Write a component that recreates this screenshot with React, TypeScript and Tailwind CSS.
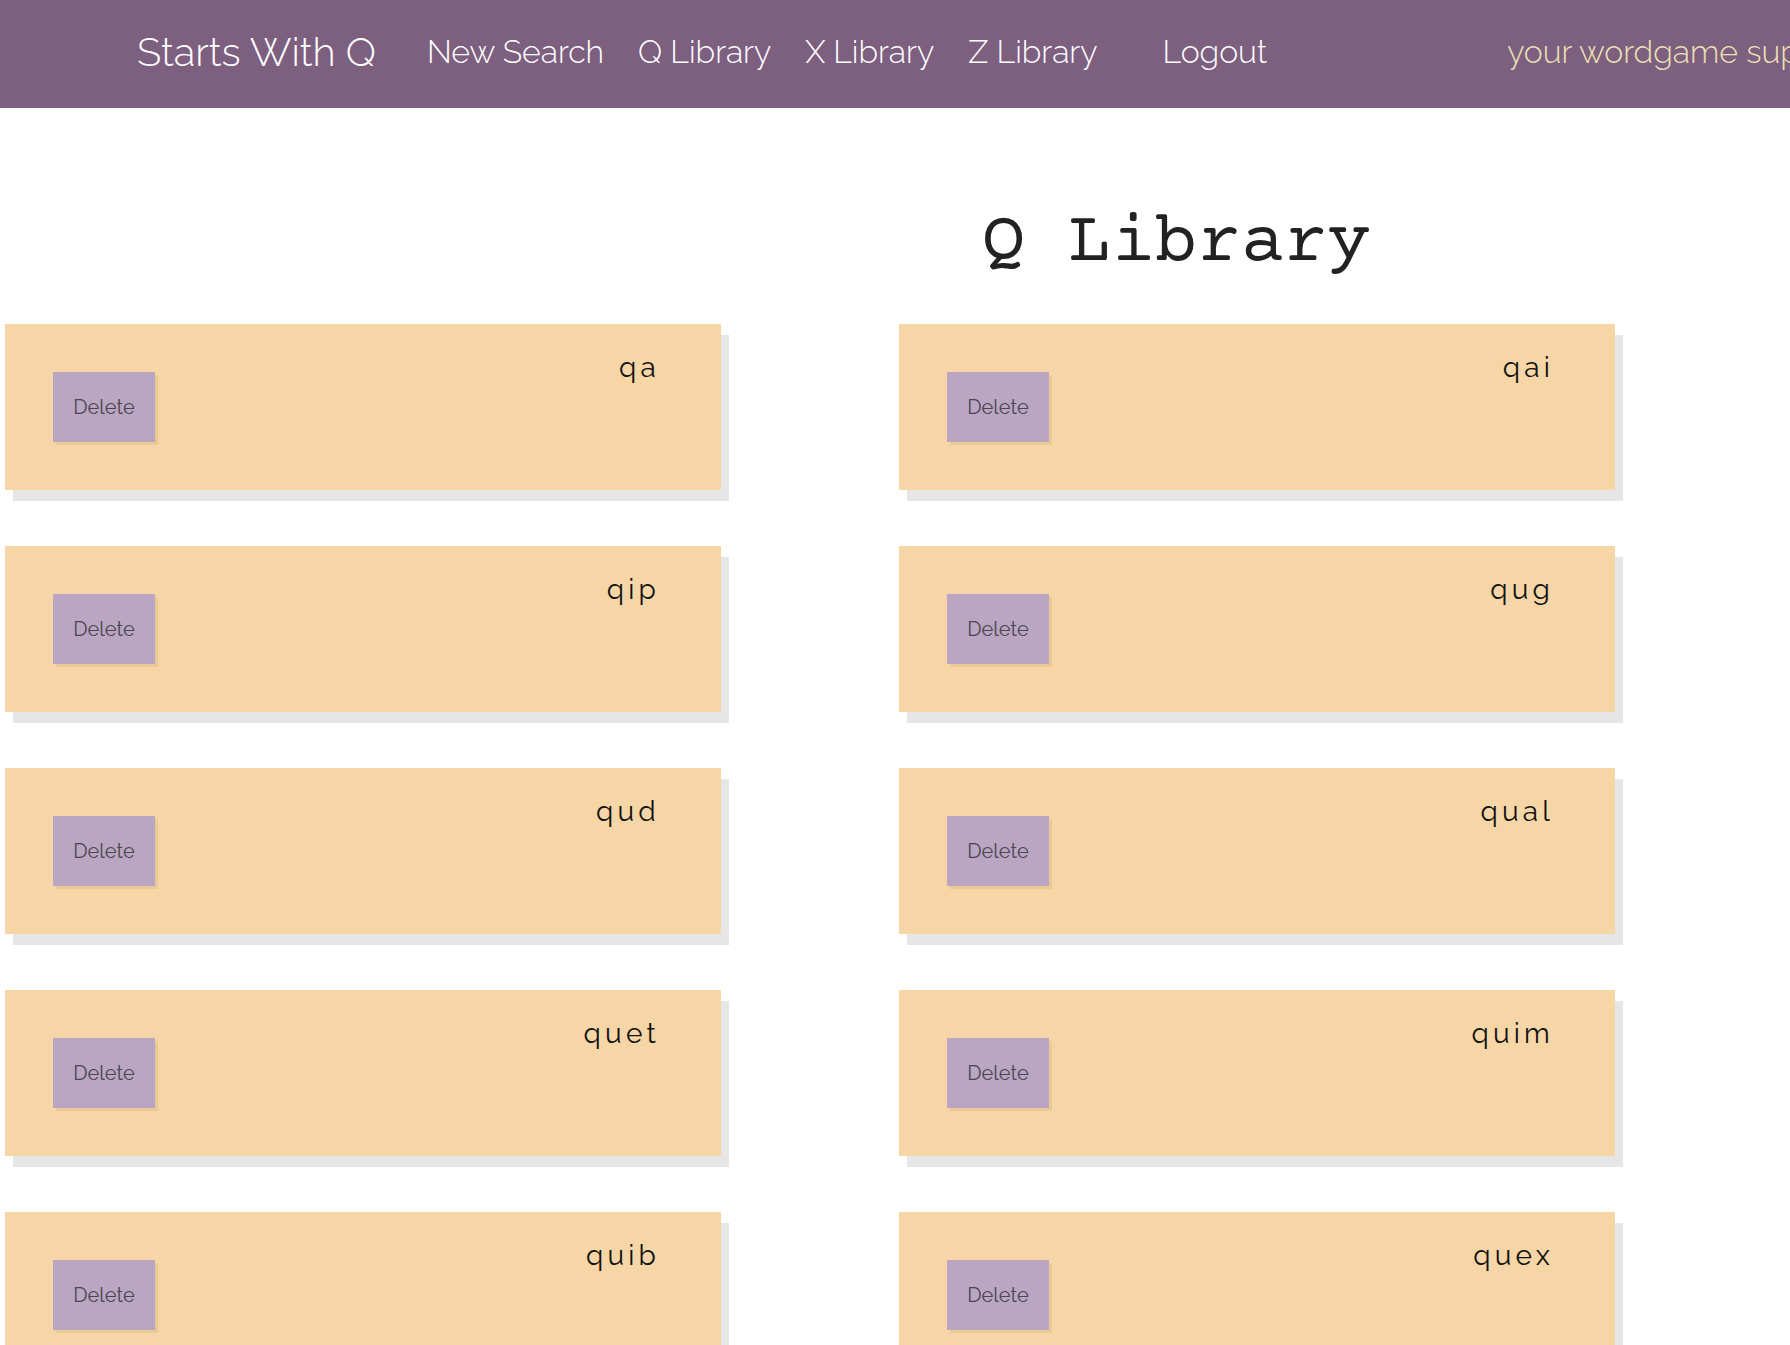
import React from "react";

const pairs: [string, string][] = [
  ["qa", "qai"],
  ["qip", "qug"],
  ["qud", "qual"],
  ["quet", "quim"],
  ["quib", "quex"],
];

const sans = "font-['Raleway','Lato','Open_Sans',sans-serif]";

const WordCard = ({ word }: { word: string }) => (
  <div className="flex h-[166px] w-[716px] shrink-0 items-start justify-between bg-[#f6d6a6] shadow-[8px_11px_0_#e6e6e6]">
    <button
      className={`${sans} ml-[48px] mt-[48px] h-[70px] w-[102px] bg-[#baa6c3] text-[20px] font-normal text-[#4b4650] shadow-[3px_3px_0_#e9c994]`}
    >
      Delete
    </button>
    <span
      className={`${sans} mr-[61px] mt-[23px] text-[28px] font-normal tracking-[0.15em] text-[#111]`}
    >
      {word}
    </span>
  </div>
);

export default function App() {
  return (
    <div className="min-h-screen overflow-hidden bg-white">
      <header
        className={`${sans} flex h-[108px] items-center whitespace-nowrap bg-[#7d5f80] pb-[4px] pl-[137px] font-light text-white`}
      >
        <span className="text-[40px]">Starts With Q</span>
        <nav className="ml-[51px] flex items-center gap-[34px] text-[32px]">
          <a>New Search</a>
          <a>Q Library</a>
          <a>X Library</a>
          <a>Z Library</a>
          <a className="ml-[31px]">Logout</a>
        </nav>
        <span className="ml-[240px] text-[32px] text-[#ebe2b4]">
          your wordgame superpower
        </span>
      </header>

      <main>
        <h1 className="pl-[982px] pt-[101px] font-['Courier_Prime','Nimbus_Mono_PS','FreeMono','Courier','Liberation_Mono',monospace] text-[72px] leading-none text-[#222]">
          Q Library
        </h1>
        <div className="mt-[43px] flex flex-col gap-[56px] pl-[5px]">
          {pairs.map(([a, b]) => (
            <div key={a} className="flex gap-[178px]">
              <WordCard word={a} />
              <WordCard word={b} />
            </div>
          ))}
        </div>
      </main>
    </div>
  );
}
